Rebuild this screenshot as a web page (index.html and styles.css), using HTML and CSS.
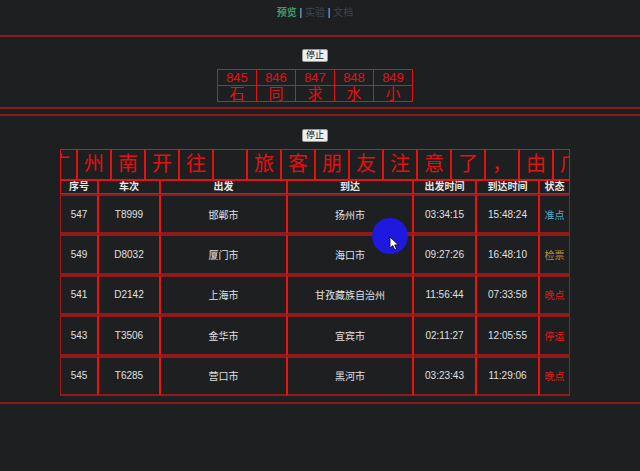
FILE: index.html
```html
<!DOCTYPE html>
<html lang="zh">
<head>
<meta charset="utf-8">
<title>预览</title>
<link rel="stylesheet" href="styles.css">
</head>
<body>
<nav class="nav"><span class="nav-on">预览</span> <span class="sep">|</span> <span class="nav-off">实验</span> <span class="sep">|</span> <span class="nav-off">文档</span></nav>

<section class="panel panel-one">
  <div class="center"><button class="btn">停止</button></div>
  <div class="center">
    <table class="mini">
      <tr class="mini-num"><td>845</td><td>846</td><td>847</td><td>848</td><td>849</td></tr>
      <tr class="mini-chr"><td>石</td><td>同</td><td>求</td><td>水</td><td>小</td></tr>
    </table>
  </div>
</section>

<section class="panel panel-two">
  <div class="center"><button class="btn">停止</button></div>
  <div class="center">
    <div class="board">
      <div class="marquee">
        <div class="strip">
          <span class="ch">广</span><span class="ch">州</span><span class="ch">南</span><span class="ch">开</span><span class="ch">往</span><span class="ch"></span><span class="ch">旅</span><span class="ch">客</span><span class="ch">朋</span><span class="ch">友</span><span class="ch">注</span><span class="ch">意</span><span class="ch">了</span><span class="ch">，</span><span class="ch">由</span><span class="ch">广</span>
        </div>
      </div>
      <table class="trains">
        <thead>
          <tr><th class="c1">序号</th><th class="c2">车次</th><th class="c3">出发</th><th class="c4">到达</th><th class="c5">出发时间</th><th class="c6">到达时间</th><th class="c7">状态</th></tr>
        </thead>
        <tbody>
          <tr><td>547</td><td>T8999</td><td>邯郸市</td><td>扬州市</td><td>03:34:15</td><td>15:48:24</td><td class="st-ok">准点</td></tr>
          <tr><td>549</td><td>D8032</td><td>厦门市</td><td>海口市</td><td>09:27:26</td><td>16:48:10</td><td class="st-check">检票</td></tr>
          <tr><td>541</td><td>D2142</td><td>上海市</td><td>甘孜藏族自治州</td><td>11:56:44</td><td>07:33:58</td><td class="st-bad">晚点</td></tr>
          <tr><td>543</td><td>T3506</td><td>金华市</td><td>宜宾市</td><td>02:11:27</td><td>12:05:55</td><td class="st-bad">停运</td></tr>
          <tr><td>545</td><td>T6285</td><td>营口市</td><td>黑河市</td><td>03:23:43</td><td>11:29:06</td><td class="st-bad">晚点</td></tr>
        </tbody>
      </table>
    </div>
  </div>
</section>

<div class="cursor-dot"><svg width="11" height="15" viewBox="0 0 11 15"><path d="M1 1 L1 12 L3.8 9.6 L5.8 14 L7.6 13.2 L5.7 8.9 L9.4 8.9 Z" fill="#fff" stroke="#000" stroke-width="0.8"/></svg></div>
</body>
</html>
```

FILE: styles.css
```css
* { box-sizing: border-box; }
html, body { margin: 0; padding: 0; }
body {
  background: #1e1f21;
  font-family: "Liberation Sans", "Noto Sans CJK SC", sans-serif;
  color: #e0e0e0;
  height: 471px;
  overflow: hidden;
  position: relative;
}
.nav {
  width: 630px;
  height: 35px;
  padding-top: 7px;
  text-align: center;
  font-size: 10px;
  line-height: 12px;
}
.nav-on { color: #3f9b6e; font-weight: bold; }
.nav-off { color: #3a4655; }
.sep { color: #c8c8d0; }

.panel {
  border-top: 2px solid #8b1a1a;
  border-bottom: 2px solid #8b1a1a;
}
.panel-one { padding: 12px 0 5px; }
.panel-two { margin-top: 5px; padding: 13px 0 6px; }

.center {
  width: 630px;
  display: flex;
  justify-content: center;
}
.btn {
  width: 26px;
  height: 13px;
  padding: 0;
  margin: 0;
  font-family: "Liberation Sans", "Noto Sans CJK SC", sans-serif;
  font-size: 9px;
  line-height: 11px;
  color: #111;
  background: #efefef;
  border: 1px solid #9a9a9a;
  border-radius: 2px;
}
.mini {
  margin-top: 7px;
  border-collapse: collapse;
  width: 195px;
  table-layout: fixed;
  color: #e51010;
}
.mini td {
  border: 1px solid #e51010;
  width: 39px;
  padding: 0;
  text-align: center;
}
.mini-num td {
  height: 16px;
  font-size: 13px;
  line-height: 14px;
}
.mini-chr td {
  height: 16px;
  font-size: 15px;
  line-height: 15px;
}

.board {
  margin-top: 7px;
  width: 510px;
}
.marquee {
  width: 510px;
  height: 31px;
  border-left: 1px solid #e51010;
  border-right: 1px solid #e51010;
  overflow: hidden;
}
.strip {
  display: flex;
  transform: translateX(-18px);
}
.ch {
  flex: 0 0 34px;
  width: 34px;
  height: 31px;
  border: 1px solid #e51010;
  color: #e51010;
  font-size: 20px;
  line-height: 29px;
  text-align: center;
}

.trains {
  width: 510px;
  table-layout: fixed;
  border-collapse: separate;
  border-spacing: 0;
  font-size: 10px;
  text-align: center;
}
.trains th {
  height: 14px;
  padding: 0;
  font-size: 10px;
  line-height: 12px;
  color: #e8e8e8;
  font-weight: bold;
  border: 1px solid #e51010;
}
.trains td {
  height: 40.4px;
  padding: 0;
  color: #e0e0e0;
  border-left: 1px solid #f01010;
  border-right: 1px solid #f01010;
  border-top: 2px solid #8e1a1a;
  border-bottom: 2px solid #8e1a1a;
}
.trains td:first-child { border-left-color: #a01818; }
.trains td:last-child { border-right-color: #a01818; }
.c1 { width: 38px; }
.c2 { width: 62px; }
.c3 { width: 127px; }
.c4 { width: 126px; }
.c5 { width: 63px; }
.c6 { width: 63px; }
.c7 { width: 31px; }
.trains td.st-ok { color: #55a9c4; }
.trains td.st-check { color: #b98b3c; }
.trains td.st-bad { color: #e51818; }

.cursor-dot {
  position: absolute;
  left: 372px;
  top: 218px;
  width: 36px;
  height: 36px;
  border-radius: 50%;
  background: #1f19e0;
}
.cursor-dot svg {
  position: absolute;
  left: 17px;
  top: 18px;
}
```
